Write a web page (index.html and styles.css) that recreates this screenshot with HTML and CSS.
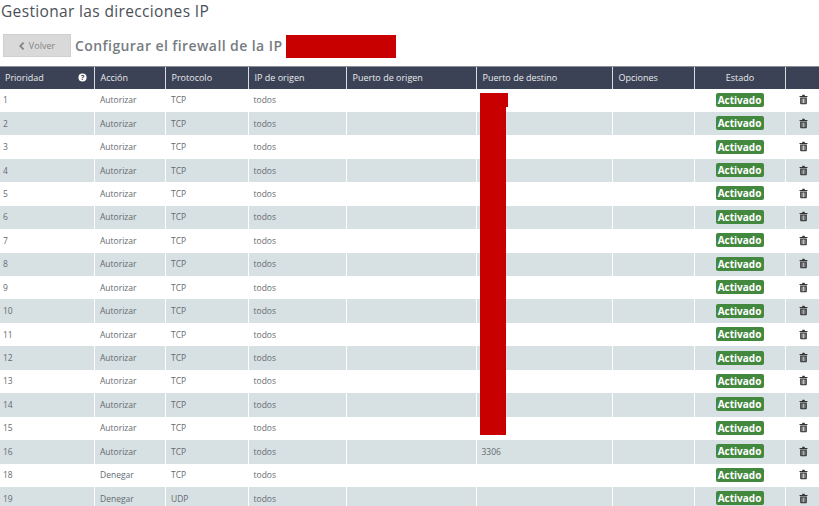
FILE: index.html
```html
<!DOCTYPE html>
<html lang="es">
<head>
<meta charset="utf-8">
<title>Gestionar las direcciones IP</title>
<link rel="stylesheet" href="styles.css">
</head>
<body>
<svg class="defs" width="0" height="0" aria-hidden="true"><symbol id="trash" viewBox="0 0 10 11"><path d="M3.4 1.6 3.9.3h2.2l.5 1.3H9.4v1H.6v-1zM1.3 3.2h7.4v6.6c0 .6-.4 1-.9 1H2.2c-.5 0-.9-.4-.9-1zM3 4.4v5.2h.8V4.4zm1.6 0v5.2h.8V4.4zm1.6 0v5.2H7V4.4z"/></symbol></svg>
<h1 class="title">Gestionar las direcciones IP</h1>
<div class="bar">
  <a class="back"><svg class="chev" viewBox="0 0 6 8"><path d="M4.6.6 1.2 4l3.4 3.4" /></svg>Volver</a>
  <h2 class="sub">Configurar el firewall de la IP</h2>
  <span class="mask-ip"></span>
</div>
<div class="wrap">
<table class="rules">
<colgroup><col class="c1"><col class="c2"><col class="c3"><col class="c4"><col class="c5"><col class="c6"><col class="c7"><col class="c8"><col class="c9"></colgroup>
<thead><tr>
<th><span class="prio">Prioridad<svg class="help" viewBox="0 0 10 10"><circle cx="5" cy="5" r="4.5" fill="#fff"/><text x="5" y="7.9" text-anchor="middle" class="q">?</text></svg></span></th>
<th>Acción</th><th>Protocolo</th><th>IP de origen</th><th>Puerto de origen</th><th>Puerto de destino</th><th>Opciones</th><th class="ctr">Estado</th><th></th>
</tr></thead>
<tbody id="rows">
<tr><td>1</td><td>Autorizar</td><td>TCP</td><td>todos</td><td></td><td></td><td></td><td class="ctr"><span class="badge">Activado</span></td><td class="ctr"><svg class="bin"><use href="#trash"/></svg></td></tr>
<tr><td>2</td><td>Autorizar</td><td>TCP</td><td>todos</td><td></td><td></td><td></td><td class="ctr"><span class="badge">Activado</span></td><td class="ctr"><svg class="bin"><use href="#trash"/></svg></td></tr>
<tr><td>3</td><td>Autorizar</td><td>TCP</td><td>todos</td><td></td><td></td><td></td><td class="ctr"><span class="badge">Activado</span></td><td class="ctr"><svg class="bin"><use href="#trash"/></svg></td></tr>
<tr><td>4</td><td>Autorizar</td><td>TCP</td><td>todos</td><td></td><td></td><td></td><td class="ctr"><span class="badge">Activado</span></td><td class="ctr"><svg class="bin"><use href="#trash"/></svg></td></tr>
<tr><td>5</td><td>Autorizar</td><td>TCP</td><td>todos</td><td></td><td></td><td></td><td class="ctr"><span class="badge">Activado</span></td><td class="ctr"><svg class="bin"><use href="#trash"/></svg></td></tr>
<tr><td>6</td><td>Autorizar</td><td>TCP</td><td>todos</td><td></td><td></td><td></td><td class="ctr"><span class="badge">Activado</span></td><td class="ctr"><svg class="bin"><use href="#trash"/></svg></td></tr>
<tr><td>7</td><td>Autorizar</td><td>TCP</td><td>todos</td><td></td><td></td><td></td><td class="ctr"><span class="badge">Activado</span></td><td class="ctr"><svg class="bin"><use href="#trash"/></svg></td></tr>
<tr><td>8</td><td>Autorizar</td><td>TCP</td><td>todos</td><td></td><td></td><td></td><td class="ctr"><span class="badge">Activado</span></td><td class="ctr"><svg class="bin"><use href="#trash"/></svg></td></tr>
<tr><td>9</td><td>Autorizar</td><td>TCP</td><td>todos</td><td></td><td></td><td></td><td class="ctr"><span class="badge">Activado</span></td><td class="ctr"><svg class="bin"><use href="#trash"/></svg></td></tr>
<tr><td>10</td><td>Autorizar</td><td>TCP</td><td>todos</td><td></td><td></td><td></td><td class="ctr"><span class="badge">Activado</span></td><td class="ctr"><svg class="bin"><use href="#trash"/></svg></td></tr>
<tr><td>11</td><td>Autorizar</td><td>TCP</td><td>todos</td><td></td><td></td><td></td><td class="ctr"><span class="badge">Activado</span></td><td class="ctr"><svg class="bin"><use href="#trash"/></svg></td></tr>
<tr><td>12</td><td>Autorizar</td><td>TCP</td><td>todos</td><td></td><td></td><td></td><td class="ctr"><span class="badge">Activado</span></td><td class="ctr"><svg class="bin"><use href="#trash"/></svg></td></tr>
<tr><td>13</td><td>Autorizar</td><td>TCP</td><td>todos</td><td></td><td></td><td></td><td class="ctr"><span class="badge">Activado</span></td><td class="ctr"><svg class="bin"><use href="#trash"/></svg></td></tr>
<tr><td>14</td><td>Autorizar</td><td>TCP</td><td>todos</td><td></td><td></td><td></td><td class="ctr"><span class="badge">Activado</span></td><td class="ctr"><svg class="bin"><use href="#trash"/></svg></td></tr>
<tr><td>15</td><td>Autorizar</td><td>TCP</td><td>todos</td><td></td><td></td><td></td><td class="ctr"><span class="badge">Activado</span></td><td class="ctr"><svg class="bin"><use href="#trash"/></svg></td></tr>
<tr><td>16</td><td>Autorizar</td><td>TCP</td><td>todos</td><td></td><td>3306</td><td></td><td class="ctr"><span class="badge">Activado</span></td><td class="ctr"><svg class="bin"><use href="#trash"/></svg></td></tr>
<tr><td>18</td><td>Denegar</td><td>TCP</td><td>todos</td><td></td><td></td><td></td><td class="ctr"><span class="badge">Activado</span></td><td class="ctr"><svg class="bin"><use href="#trash"/></svg></td></tr>
<tr><td>19</td><td>Denegar</td><td>UDP</td><td>todos</td><td></td><td></td><td></td><td class="ctr"><span class="badge">Activado</span></td><td class="ctr"><svg class="bin"><use href="#trash"/></svg></td></tr>
</tbody>
</table>
<div class="mask-top"></div>
<div class="mask-col"></div>
</div>
</body>
</html>
```
FILE: styles.css
```css
html, body { margin: 0; padding: 0; }
body { width: 819px; height: 506px; overflow: hidden; background: #fff; font-family: "Open Sans", sans-serif; color: #5a5f66; }
.defs { position: absolute; }
.title { box-sizing: border-box; margin: 0; height: 34px; padding: 2px 0 0 1px; font-size: 15.5px; line-height: 19px; font-weight: 400; letter-spacing: .35px; color: #4a5058; }
.bar { display: flex; align-items: flex-start; height: 24px; padding-left: 3px; }
.back { display: flex; align-items: center; justify-content: center; box-sizing: border-box; width: 68px; height: 23px; background: #d9d9d9; border: 1px solid #cfcfcf; font-size: 9px; color: #858585; }
.chev { width: 6px; height: 8px; margin-right: 4px; fill: none; stroke: #858585; stroke-width: 1.8; }
.sub { margin: 2px 4px 0 4px; width: 207px; white-space: nowrap; font-size: 14px; line-height: 20px; font-weight: 600; letter-spacing: .42px; color: #767c81; }
.mask-ip { width: 110px; height: 23px; margin-top: 1px; background: #c80000; }
.wrap { position: relative; margin-top: 8px; }
.rules { width: 819px; table-layout: fixed; border-collapse: collapse; font-size: 8.5px; }
.c1 { width: 94px; } .c2 { width: 71px; } .c3 { width: 83px; } .c4 { width: 98px; } .c5 { width: 130px; } .c6 { width: 136px; } .c7 { width: 82px; } .c8 { width: 91px; } .c9 { width: 34px; }
thead tr { height: 22px; }
th { padding: 0 0 1px 6px; background: #3c4255; color: #e8eaee; font-size: 9px; font-weight: 400; text-align: left; border-left: 1px solid #d8dde0; border-top: 1px solid #8a8e99; }
th:first-child { border-left: 0; padding-left: 5px; }
th.ctr { text-align: center; padding: 0 0 1px 1px; }
.prio { display: flex; align-items: center; justify-content: space-between; padding-right: 7px; }
.help { width: 9px; height: 9px; }
.q { font-size: 8.5px; font-weight: 700; fill: #3c4255; }
tbody tr { height: 23.44px; }
tbody tr:nth-child(even) td { background: #d7e0e3; }
td { padding: 0 0 1px 5px; border-left: 1px solid #fff; color: #666b70; }
td:first-child { border-left: 0; padding-left: 3px; }
td:nth-child(2), td:nth-child(3) { padding-left: 5.5px; }
td.ctr { padding: 0 0 1px; text-align: center; }
td.ctr:last-child { padding-left: 2px; }
.badge { display: inline-block; width: 48px; height: 14px; border-radius: 2px; background: #43883f; color: #fff; font-size: 10px; font-weight: 700; line-height: 14px; vertical-align: middle; }
.bin { display: block; width: 9px; height: 11px; margin: 0 auto; fill: #333; }
.mask-top { position: absolute; left: 480px; top: 27px; width: 28px; height: 14px; background: #c80000; }
.mask-col { position: absolute; left: 480px; top: 41px; width: 26px; height: 328px; background: #c80000; }
```
